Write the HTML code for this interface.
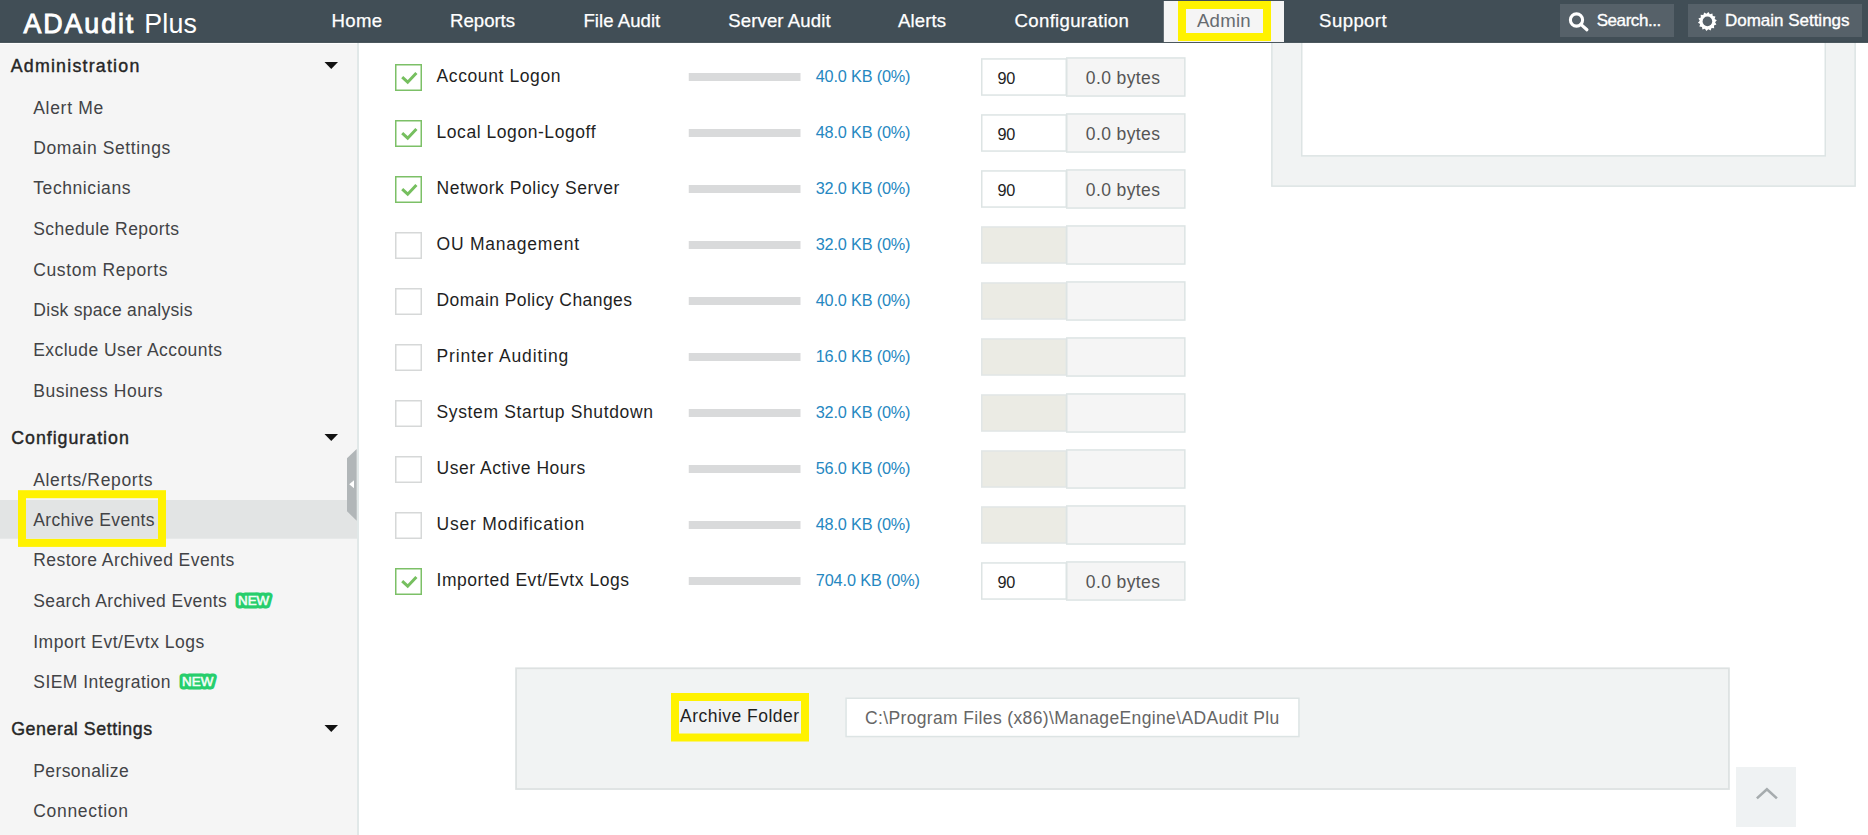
<!DOCTYPE html>
<html>
<head>
<meta charset="utf-8">
<title>ADAudit Plus</title>
<style>
html,body{margin:0;padding:0;}
body{width:1868px;height:835px;overflow:hidden;background:#fff;position:relative;font-family:"Liberation Sans",sans-serif;}
.abs,.t{position:absolute;box-sizing:border-box;}
.t{white-space:pre;font-family:"Liberation Sans",sans-serif;}
</style>
</head>
<body>
<svg class="abs" style="left:0;top:0" width="1868" height="835" viewBox="0 0 1868 835">
<rect x="0" y="43.8" width="357.000" height="791.200" fill="#f5f5f5"/>
<rect x="357" y="42.5" width="2.000" height="792.500" fill="#e1e8e8"/>
<rect x="0" y="500" width="357.000" height="38.700" fill="#e2e4e4"/>
<rect x="22.000" y="494.200" width="140.000" height="48.700" fill="none" stroke="#fff200" stroke-width="8"/>
<path d="M324.5 62 L338 62 L331.25 69 Z" fill="#111"/>
<path d="M324.5 434 L338 434 L331.25 441 Z" fill="#111"/>
<path d="M324.5 725 L338 725 L331.25 732 Z" fill="#111"/>
<path d="M347 458.2 L356.7 449 L356.7 520.8 L347 511.2 Z" fill="#b1b6b8"/>
<path d="M349.2 484.3 L354 480.3 L354 488.3 Z" fill="#fff"/>
<rect x="1271.850" y="30.750" width="583.300" height="155.400" fill="#f1f3f3" stroke="#dde4e4" stroke-width="1.5"/>
<rect x="1301.750" y="30.750" width="523.500" height="125.100" fill="#fff" stroke="#dde4e4" stroke-width="1.5"/>
<rect x="0" y="0" width="1868.000" height="42.700" fill="#414e56"/>
<rect x="0" y="41.7" width="1868.000" height="1.000" fill="#3a464e"/>
<rect x="1163.8" y="1" width="120.200" height="41.000" fill="#f5f5f5"/>
<rect x="1182.000" y="5.000" width="85.000" height="32.000" fill="none" stroke="#fff200" stroke-width="8"/>
<rect x="1560" y="4" width="114.000" height="33.000" fill="#566169"/>
<rect x="1688" y="4" width="174.000" height="33.000" fill="#566169"/>
<circle cx="1576.5" cy="20" r="6.1" fill="none" stroke="#fff" stroke-width="3.1"/>
<path d="M1580.9 24.4 L1586.9 29.8" stroke="#fff" stroke-width="3.2" stroke-linecap="round"/>
<polygon points="1708.39,12.05 1709.89,14.21 1712.39,13.42 1712.80,16.01 1715.41,16.39 1714.65,18.90 1716.83,20.37 1715.06,22.30 1716.39,24.57 1713.95,25.55 1714.17,28.17 1711.55,27.99 1710.60,30.44 1708.32,29.14 1706.41,30.95 1704.91,28.79 1702.41,29.58 1702.00,26.99 1699.39,26.61 1700.15,24.10 1697.97,22.63 1699.74,20.70 1698.41,18.43 1700.85,17.45 1700.63,14.83 1703.25,15.01 1704.20,12.56 1706.48,13.86" fill="#fff"/>
<circle cx="1707.4" cy="21.4" r="4.8" fill="#566169"/>
<rect x="395.750" y="64.750" width="25.500" height="25.500" fill="#fff" stroke="#7cc067" stroke-width="1.5"/>
<path d="M402.2 77.2 L407.7 82.2 L416.4 73.0" fill="none" stroke="#76bf5f" stroke-width="3"/>
<rect x="981.750" y="58.950" width="84.500" height="36.100" fill="#fff" stroke="#dde4e4" stroke-width="1.5"/>
<rect x="688.75" y="73" width="111.750" height="8.000" fill="#d9dadb"/>
<rect x="1066.750" y="57.950" width="118.100" height="38.100" fill="#f5f5f5" stroke="#dde4e4" stroke-width="1.5"/>
<rect x="395.750" y="120.750" width="25.500" height="25.500" fill="#fff" stroke="#7cc067" stroke-width="1.5"/>
<path d="M402.2 133.2 L407.7 138.2 L416.4 129.0" fill="none" stroke="#76bf5f" stroke-width="3"/>
<rect x="981.750" y="114.950" width="84.500" height="36.100" fill="#fff" stroke="#dde4e4" stroke-width="1.5"/>
<rect x="688.75" y="129" width="111.750" height="8.000" fill="#d9dadb"/>
<rect x="1066.750" y="113.950" width="118.100" height="38.100" fill="#f5f5f5" stroke="#dde4e4" stroke-width="1.5"/>
<rect x="395.750" y="176.750" width="25.500" height="25.500" fill="#fff" stroke="#7cc067" stroke-width="1.5"/>
<path d="M402.2 189.2 L407.7 194.2 L416.4 185.0" fill="none" stroke="#76bf5f" stroke-width="3"/>
<rect x="981.750" y="170.950" width="84.500" height="36.100" fill="#fff" stroke="#dde4e4" stroke-width="1.5"/>
<rect x="688.75" y="185" width="111.750" height="8.000" fill="#d9dadb"/>
<rect x="1066.750" y="169.950" width="118.100" height="38.100" fill="#f5f5f5" stroke="#dde4e4" stroke-width="1.5"/>
<rect x="395.750" y="232.750" width="25.500" height="25.500" fill="#fff" stroke="#d6d8d8" stroke-width="1.5"/>
<rect x="981.750" y="226.950" width="84.500" height="36.100" fill="#ebebe4" stroke="#e1e6e6" stroke-width="1.5"/>
<rect x="688.75" y="241" width="111.750" height="8.000" fill="#d9dadb"/>
<rect x="1066.750" y="225.950" width="118.100" height="38.100" fill="#f5f5f5" stroke="#dde4e4" stroke-width="1.5"/>
<rect x="395.750" y="288.750" width="25.500" height="25.500" fill="#fff" stroke="#d6d8d8" stroke-width="1.5"/>
<rect x="981.750" y="282.950" width="84.500" height="36.100" fill="#ebebe4" stroke="#e1e6e6" stroke-width="1.5"/>
<rect x="688.75" y="297" width="111.750" height="8.000" fill="#d9dadb"/>
<rect x="1066.750" y="281.950" width="118.100" height="38.100" fill="#f5f5f5" stroke="#dde4e4" stroke-width="1.5"/>
<rect x="395.750" y="344.750" width="25.500" height="25.500" fill="#fff" stroke="#d6d8d8" stroke-width="1.5"/>
<rect x="981.750" y="338.950" width="84.500" height="36.100" fill="#ebebe4" stroke="#e1e6e6" stroke-width="1.5"/>
<rect x="688.75" y="353" width="111.750" height="8.000" fill="#d9dadb"/>
<rect x="1066.750" y="337.950" width="118.100" height="38.100" fill="#f5f5f5" stroke="#dde4e4" stroke-width="1.5"/>
<rect x="395.750" y="400.750" width="25.500" height="25.500" fill="#fff" stroke="#d6d8d8" stroke-width="1.5"/>
<rect x="981.750" y="394.950" width="84.500" height="36.100" fill="#ebebe4" stroke="#e1e6e6" stroke-width="1.5"/>
<rect x="688.75" y="409" width="111.750" height="8.000" fill="#d9dadb"/>
<rect x="1066.750" y="393.950" width="118.100" height="38.100" fill="#f5f5f5" stroke="#dde4e4" stroke-width="1.5"/>
<rect x="395.750" y="456.750" width="25.500" height="25.500" fill="#fff" stroke="#d6d8d8" stroke-width="1.5"/>
<rect x="981.750" y="450.950" width="84.500" height="36.100" fill="#ebebe4" stroke="#e1e6e6" stroke-width="1.5"/>
<rect x="688.75" y="465" width="111.750" height="8.000" fill="#d9dadb"/>
<rect x="1066.750" y="449.950" width="118.100" height="38.100" fill="#f5f5f5" stroke="#dde4e4" stroke-width="1.5"/>
<rect x="395.750" y="512.750" width="25.500" height="25.500" fill="#fff" stroke="#d6d8d8" stroke-width="1.5"/>
<rect x="981.750" y="506.950" width="84.500" height="36.100" fill="#ebebe4" stroke="#e1e6e6" stroke-width="1.5"/>
<rect x="688.75" y="521" width="111.750" height="8.000" fill="#d9dadb"/>
<rect x="1066.750" y="505.950" width="118.100" height="38.100" fill="#f5f5f5" stroke="#dde4e4" stroke-width="1.5"/>
<rect x="395.750" y="568.750" width="25.500" height="25.500" fill="#fff" stroke="#7cc067" stroke-width="1.5"/>
<path d="M402.2 581.2 L407.7 586.2 L416.4 577.0" fill="none" stroke="#76bf5f" stroke-width="3"/>
<rect x="981.750" y="562.950" width="84.500" height="36.100" fill="#fff" stroke="#dde4e4" stroke-width="1.5"/>
<rect x="688.75" y="577" width="111.750" height="8.000" fill="#d9dadb"/>
<rect x="1066.750" y="561.950" width="118.100" height="38.100" fill="#f5f5f5" stroke="#dde4e4" stroke-width="1.5"/>
<rect x="516.075" y="668.275" width="1212.850" height="120.750" fill="#f1f3f3" stroke="#dde1e1" stroke-width="1.75"/>
<rect x="675.000" y="697.000" width="130.000" height="40.500" fill="none" stroke="#fff200" stroke-width="8"/>
<rect x="846.050" y="698.250" width="452.900" height="38.300" fill="#fff" stroke="#dde4e4" stroke-width="1.5"/>
<rect x="1736" y="767" width="60.000" height="60.000" fill="#eff2f3"/>
<path d="M1756.9 798.4 L1766.9 789.3 L1776.9 798.4" fill="none" stroke="#a6acae" stroke-width="2.6"/>
<text x="238" y="605.2" font-family="Liberation Sans, sans-serif" font-size="13.4" font-weight="700" fill="#27ce6c" stroke="#27ce6c" stroke-width="6.8" stroke-linejoin="round">NEW</text>
<text x="238" y="605.2" font-family="Liberation Sans, sans-serif" font-size="13.4" font-weight="400" fill="#f4fdf8" stroke="#f4fdf8" stroke-width="0.55">NEW</text>
<text x="182.1" y="686.4" font-family="Liberation Sans, sans-serif" font-size="13.4" font-weight="700" fill="#27ce6c" stroke="#27ce6c" stroke-width="6.8" stroke-linejoin="round">NEW</text>
<text x="182.1" y="686.4" font-family="Liberation Sans, sans-serif" font-size="13.4" font-weight="400" fill="#f4fdf8" stroke="#f4fdf8" stroke-width="0.55">NEW</text>
</svg>
<span class="t" style="left:23.45px;top:7.000px;font-size:26.8px;line-height:35px;font-weight:400;color:#fff;letter-spacing:1.923px;-webkit-text-stroke:0.9px #fff;">ADAudit</span>
<span class="t" style="left:144.25px;top:7.000px;font-size:26.8px;line-height:35px;font-weight:400;color:#fff;letter-spacing:0.203px;">Plus</span>
<span class="t" style="left:331.62px;top:9.000px;font-size:18.6px;line-height:24px;font-weight:400;color:#fff;letter-spacing:0.280px;-webkit-text-stroke:0.25px #fff;">Home</span>
<span class="t" style="left:450.12px;top:9.000px;font-size:18.6px;line-height:24px;font-weight:400;color:#fff;letter-spacing:-0.027px;-webkit-text-stroke:0.25px #fff;">Reports</span>
<span class="t" style="left:583.42px;top:9.000px;font-size:18.6px;line-height:24px;font-weight:400;color:#fff;letter-spacing:0.041px;-webkit-text-stroke:0.25px #fff;">File Audit</span>
<span class="t" style="left:728.33px;top:9.000px;font-size:18.6px;line-height:24px;font-weight:400;color:#fff;letter-spacing:0.087px;-webkit-text-stroke:0.25px #fff;">Server Audit</span>
<span class="t" style="left:898.12px;top:9.000px;font-size:18.6px;line-height:24px;font-weight:400;color:#fff;letter-spacing:0.094px;-webkit-text-stroke:0.25px #fff;">Alerts</span>
<span class="t" style="left:1014.62px;top:9.000px;font-size:18.6px;line-height:24px;font-weight:400;color:#fff;letter-spacing:0.303px;-webkit-text-stroke:0.25px #fff;">Configuration</span>
<span class="t" style="left:1319.12px;top:9.000px;font-size:18.6px;line-height:24px;font-weight:400;color:#fff;letter-spacing:0.396px;-webkit-text-stroke:0.25px #fff;">Support</span>
<span class="t" style="left:1197.00px;top:9.000px;font-size:18.6px;line-height:24px;font-weight:400;color:#666b70;letter-spacing:0.220px;">Admin</span>
<span class="t" style="left:1596.67px;top:10.000px;font-size:17px;line-height:22px;font-weight:400;color:#fff;letter-spacing:-0.425px;-webkit-text-stroke:0.35px #fff;">Search...</span>
<span class="t" style="left:1724.97px;top:10.000px;font-size:17px;line-height:22px;font-weight:400;color:#fff;letter-spacing:-0.013px;-webkit-text-stroke:0.35px #fff;">Domain Settings</span>
<span class="t" style="left:10.70px;top:55.000px;font-size:17.8px;line-height:23px;font-weight:400;color:#262626;letter-spacing:1.225px;-webkit-text-stroke:0.4px #262626;">Administration</span>
<span class="t" style="left:11.20px;top:427.000px;font-size:17.8px;line-height:23px;font-weight:400;color:#262626;letter-spacing:0.985px;-webkit-text-stroke:0.4px #262626;">Configuration</span>
<span class="t" style="left:11.20px;top:718.000px;font-size:17.8px;line-height:23px;font-weight:400;color:#262626;letter-spacing:0.560px;-webkit-text-stroke:0.4px #262626;">General Settings</span>
<span class="t" style="left:33.25px;top:97.000px;font-size:17.5px;line-height:23px;font-weight:400;color:#424346;letter-spacing:0.692px;">Alert Me</span>
<span class="t" style="left:33.25px;top:137.000px;font-size:17.5px;line-height:23px;font-weight:400;color:#424346;letter-spacing:0.614px;">Domain Settings</span>
<span class="t" style="left:33.25px;top:177.000px;font-size:17.5px;line-height:23px;font-weight:400;color:#424346;letter-spacing:0.580px;">Technicians</span>
<span class="t" style="left:33.25px;top:218.000px;font-size:17.5px;line-height:23px;font-weight:400;color:#424346;letter-spacing:0.442px;">Schedule Reports</span>
<span class="t" style="left:33.25px;top:259.000px;font-size:17.5px;line-height:23px;font-weight:400;color:#424346;letter-spacing:0.601px;">Custom Reports</span>
<span class="t" style="left:33.25px;top:299.000px;font-size:17.5px;line-height:23px;font-weight:400;color:#424346;letter-spacing:0.310px;">Disk space analysis</span>
<span class="t" style="left:33.25px;top:339.000px;font-size:17.5px;line-height:23px;font-weight:400;color:#424346;letter-spacing:0.440px;">Exclude User Accounts</span>
<span class="t" style="left:33.25px;top:380.000px;font-size:17.5px;line-height:23px;font-weight:400;color:#424346;letter-spacing:0.514px;">Business Hours</span>
<span class="t" style="left:33.25px;top:469.000px;font-size:17.5px;line-height:23px;font-weight:400;color:#424346;letter-spacing:0.644px;">Alerts/Reports</span>
<span class="t" style="left:33.25px;top:509.000px;font-size:17.5px;line-height:23px;font-weight:400;color:#424346;letter-spacing:0.349px;">Archive Events</span>
<span class="t" style="left:33.25px;top:549.000px;font-size:17.5px;line-height:23px;font-weight:400;color:#424346;letter-spacing:0.426px;">Restore Archived Events</span>
<span class="t" style="left:33.25px;top:590.000px;font-size:17.5px;line-height:23px;font-weight:400;color:#424346;letter-spacing:0.367px;">Search Archived Events</span>
<span class="t" style="left:33.25px;top:631.000px;font-size:17.5px;line-height:23px;font-weight:400;color:#424346;letter-spacing:0.502px;">Import Evt/Evtx Logs</span>
<span class="t" style="left:33.25px;top:671.000px;font-size:17.5px;line-height:23px;font-weight:400;color:#424346;letter-spacing:0.459px;">SIEM Integration</span>
<span class="t" style="left:33.25px;top:760.000px;font-size:17.5px;line-height:23px;font-weight:400;color:#424346;letter-spacing:0.405px;">Personalize</span>
<span class="t" style="left:33.25px;top:800.000px;font-size:17.5px;line-height:23px;font-weight:400;color:#424346;letter-spacing:0.689px;">Connection</span>
<span class="t" style="left:436.50px;top:65.000px;font-size:17.5px;line-height:23px;font-weight:400;color:#1f1f1f;letter-spacing:0.603px;">Account Logon</span>
<span class="t" style="left:815.75px;top:66.000px;font-size:16.25px;line-height:21px;font-weight:400;color:#2587c1;letter-spacing:-0.173px;">40.0 KB (0%)</span>
<span class="t" style="left:997.50px;top:68.000px;font-size:16.25px;line-height:21px;font-weight:400;color:#222;letter-spacing:-0.328px;">90</span>
<span class="t" style="left:1085.75px;top:67.000px;font-size:17.5px;line-height:23px;font-weight:400;color:#555;letter-spacing:0.402px;">0.0 bytes</span>
<span class="t" style="left:436.50px;top:121.000px;font-size:17.5px;line-height:23px;font-weight:400;color:#1f1f1f;letter-spacing:0.557px;">Local Logon-Logoff</span>
<span class="t" style="left:815.75px;top:122.000px;font-size:16.25px;line-height:21px;font-weight:400;color:#2587c1;letter-spacing:-0.173px;">48.0 KB (0%)</span>
<span class="t" style="left:997.50px;top:124.000px;font-size:16.25px;line-height:21px;font-weight:400;color:#222;letter-spacing:-0.328px;">90</span>
<span class="t" style="left:1085.75px;top:123.000px;font-size:17.5px;line-height:23px;font-weight:400;color:#555;letter-spacing:0.402px;">0.0 bytes</span>
<span class="t" style="left:436.50px;top:177.000px;font-size:17.5px;line-height:23px;font-weight:400;color:#1f1f1f;letter-spacing:0.530px;">Network Policy Server</span>
<span class="t" style="left:815.75px;top:178.000px;font-size:16.25px;line-height:21px;font-weight:400;color:#2587c1;letter-spacing:-0.173px;">32.0 KB (0%)</span>
<span class="t" style="left:997.50px;top:180.000px;font-size:16.25px;line-height:21px;font-weight:400;color:#222;letter-spacing:-0.328px;">90</span>
<span class="t" style="left:1085.75px;top:179.000px;font-size:17.5px;line-height:23px;font-weight:400;color:#555;letter-spacing:0.402px;">0.0 bytes</span>
<span class="t" style="left:436.50px;top:233.000px;font-size:17.5px;line-height:23px;font-weight:400;color:#1f1f1f;letter-spacing:0.770px;">OU Management</span>
<span class="t" style="left:815.75px;top:234.000px;font-size:16.25px;line-height:21px;font-weight:400;color:#2587c1;letter-spacing:-0.173px;">32.0 KB (0%)</span>
<span class="t" style="left:436.50px;top:289.000px;font-size:17.5px;line-height:23px;font-weight:400;color:#1f1f1f;letter-spacing:0.437px;">Domain Policy Changes</span>
<span class="t" style="left:815.75px;top:290.000px;font-size:16.25px;line-height:21px;font-weight:400;color:#2587c1;letter-spacing:-0.173px;">40.0 KB (0%)</span>
<span class="t" style="left:436.50px;top:345.000px;font-size:17.5px;line-height:23px;font-weight:400;color:#1f1f1f;letter-spacing:0.871px;">Printer Auditing</span>
<span class="t" style="left:815.75px;top:346.000px;font-size:16.25px;line-height:21px;font-weight:400;color:#2587c1;letter-spacing:-0.173px;">16.0 KB (0%)</span>
<span class="t" style="left:436.50px;top:401.000px;font-size:17.5px;line-height:23px;font-weight:400;color:#1f1f1f;letter-spacing:0.644px;">System Startup Shutdown</span>
<span class="t" style="left:815.75px;top:402.000px;font-size:16.25px;line-height:21px;font-weight:400;color:#2587c1;letter-spacing:-0.173px;">32.0 KB (0%)</span>
<span class="t" style="left:436.50px;top:457.000px;font-size:17.5px;line-height:23px;font-weight:400;color:#1f1f1f;letter-spacing:0.544px;">User Active Hours</span>
<span class="t" style="left:815.75px;top:458.000px;font-size:16.25px;line-height:21px;font-weight:400;color:#2587c1;letter-spacing:-0.173px;">56.0 KB (0%)</span>
<span class="t" style="left:436.50px;top:513.000px;font-size:17.5px;line-height:23px;font-weight:400;color:#1f1f1f;letter-spacing:0.784px;">User Modification</span>
<span class="t" style="left:815.75px;top:514.000px;font-size:16.25px;line-height:21px;font-weight:400;color:#2587c1;letter-spacing:-0.173px;">48.0 KB (0%)</span>
<span class="t" style="left:436.50px;top:569.000px;font-size:17.5px;line-height:23px;font-weight:400;color:#1f1f1f;letter-spacing:0.551px;">Imported Evt/Evtx Logs</span>
<span class="t" style="left:815.75px;top:570.000px;font-size:16.25px;line-height:21px;font-weight:400;color:#2587c1;letter-spacing:-0.120px;">704.0 KB (0%)</span>
<span class="t" style="left:997.50px;top:572.000px;font-size:16.25px;line-height:21px;font-weight:400;color:#222;letter-spacing:-0.328px;">90</span>
<span class="t" style="left:1085.75px;top:571.000px;font-size:17.5px;line-height:23px;font-weight:400;color:#555;letter-spacing:0.402px;">0.0 bytes</span>
<span class="t" style="left:680.00px;top:705.000px;font-size:17.5px;line-height:23px;font-weight:400;color:#1f1f1f;letter-spacing:0.475px;">Archive Folder</span>
<div class="abs" style="left:865.00px;top:707.000px;width:415.00px;height:23px;overflow:hidden;"><span class="t" style="left:0;top:0;font-size:17.5px;line-height:23px;font-weight:400;color:#666;letter-spacing:0.359px;">C:\Program Files (x86)\ManageEngine\ADAudit Plus\bin</span></div>
</body>
</html>
